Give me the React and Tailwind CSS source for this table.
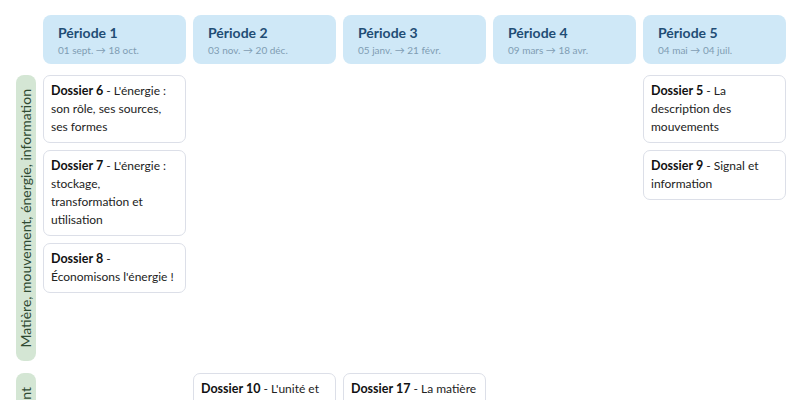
const PERIODS = [
  { name: "Période 1", dates: "01 sept. → 18 oct." },
  { name: "Période 2", dates: "03 nov. → 20 déc." },
  { name: "Période 3", dates: "05 janv. → 21 févr." },
  { name: "Période 4", dates: "09 mars → 18 avr." },
  { name: "Période 5", dates: "04 mai → 04 juil." },
];

const THEMES = [
  {
    label: "Matière, mouvement, énergie, information",
    cols: [
      [
        { id: 6, title: "L'énergie : son rôle, ses sources, ses formes" },
        { id: 7, title: "L'énergie : stockage, transformation et utilisation" },
        { id: 8, title: "Économisons l'énergie !" },
      ],
      [],
      [],
      [],
      [
        { id: 5, title: "La description des mouvements" },
        { id: 9, title: "Signal et information" },
      ],
    ],
  },
  {
    label: "Le vivant, sa diversité et les fonctions qui le caractérisent",
    cols: [
      [],
      [{ id: 10, title: "L'unité et la diversité du vivant" }],
      [{ id: 17, title: "La matière qui constitue les êtres vivants" }],
      [],
      [],
    ],
  },
];

function DossierCard({ d }) {
  return (
    <div className="bg-white border border-[#dcdfe8] rounded-[7px] px-[7px] py-[6px] text-[12px] leading-[18px] text-[#222]">
      <span className="font-bold text-[12.5px] text-[#111]">Dossier {d.id}</span> - {d.title}
    </div>
  );
}

export default function App() {
  return (
    <div className="w-[800px] h-[400px] overflow-hidden bg-white font-['Lato','Noto_Sans',sans-serif]">
      <div className="grid grid-cols-[20px_repeat(5,143px)] gap-x-[7px] pl-4 pt-[15px]">
        {/* ── Header ──────────────────────────────── */}
        <div />
        {PERIODS.map((p) => (
          <div key={p.name} className="bg-[#cfe8f7] rounded-[8px] h-[49px] pl-[15px] pt-[8px]">
            <div className="text-[14px] font-bold leading-[20px] text-[#1f4d75]">{p.name}</div>
            <div className="text-[10px] leading-[14px] text-[#7f9db3]">{p.dates}</div>
          </div>
        ))}

        {/* ── Theme rows ──────────────────────────── */}
        {THEMES.map((t, i) => (
          <div key={t.label} className="contents">
            <div
              className={`bg-[#d4e6d4] rounded-[8px] flex items-center justify-center pt-[14px] pb-[13px] ${
                i === 0 ? "mt-[11px]" : "mt-[12px]"
              }`}
            >
              <span className="[writing-mode:vertical-rl] rotate-180 text-[14px] leading-[20px] text-[#2f4a32] whitespace-nowrap">
                {t.label}
              </span>
            </div>
            {t.cols.map((col, j) => (
              <div
                key={j}
                className={`flex flex-col gap-[7px] ${i === 0 ? "mt-[11px]" : "mt-[12px]"}`}
              >
                {col.map((d) => (
                  <DossierCard key={d.id} d={d} />
                ))}
              </div>
            ))}
          </div>
        ))}
      </div>
    </div>
  );
}
